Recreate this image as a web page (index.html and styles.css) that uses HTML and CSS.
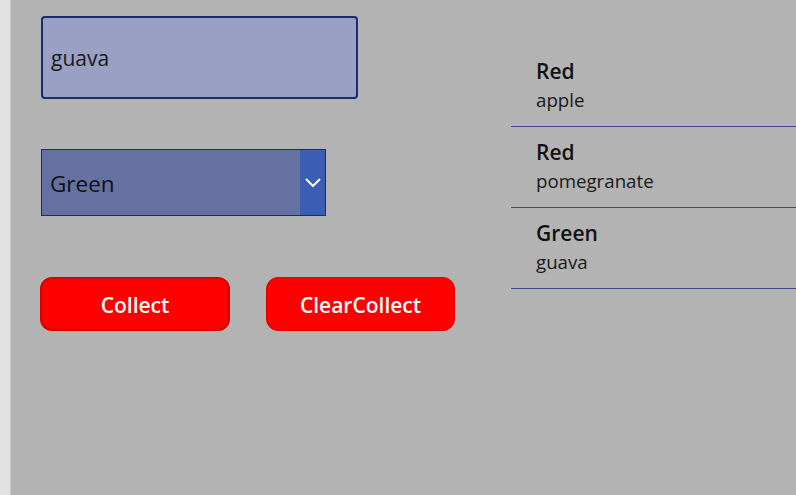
FILE: index.html
```html
<!DOCTYPE html>
<html lang="en">
<head>
<meta charset="utf-8">
<title>Collect</title>
<link rel="stylesheet" href="styles.css">
</head>
<body>
<div class="app">
  <div class="rail"></div>
  <div class="canvas">
    <div class="controls">
      <div class="text-input">guava</div>
      <div class="dropdown">
        <div class="dropdown-value">Green</div>
        <div class="dropdown-chevron">
          <svg width="16" height="9" viewBox="0 0 16 9"><polyline points="1,1 8,8 15,1" fill="none" stroke="#ffffff" stroke-width="2"/></svg>
        </div>
      </div>
      <div class="buttons">
        <button class="btn btn-collect">Collect</button>
        <button class="btn btn-clear">ClearCollect</button>
      </div>
    </div>
    <div class="gallery">
      <div class="row">
        <div class="row-title">Red</div>
        <div class="row-sub">apple</div>
      </div>
      <div class="row">
        <div class="row-title">Red</div>
        <div class="row-sub">pomegranate</div>
      </div>
      <div class="row">
        <div class="row-title">Green</div>
        <div class="row-sub">guava</div>
      </div>
    </div>
  </div>
</div>
</body>
</html>
```
FILE: styles.css
```css
html, body {
  margin: 0;
  padding: 0;
}
body {
  font-family: "Open Sans", "Noto Sans", sans-serif;
  background: #b3b3b3;
  overflow: hidden;
}
.app {
  display: flex;
  width: 796px;
  height: 495px;
}
.rail {
  width: 10px;
  flex: none;
  background: #e1e1e1;
  border-right: 1px solid #c7c7c7;
}
.canvas {
  flex: 1;
  display: flex;
  background: #b3b3b3;
}
.controls {
  width: 500px;
  flex: none;
  box-sizing: border-box;
  padding: 16px 0 0 30px;
}
.text-input {
  box-sizing: border-box;
  width: 317px;
  height: 83px;
  background: #99a0c4;
  border: 2px solid #1c2a6e;
  border-radius: 4px;
  display: flex;
  align-items: center;
  padding-left: 8px;
  font-size: 21px;
  color: #1a1a1a;
}
.dropdown {
  box-sizing: border-box;
  margin-top: 50px;
  width: 285px;
  height: 67px;
  border: 1px solid #1c2a6e;
  display: flex;
  background: #6571a3;
}
.dropdown-value {
  flex: 1;
  display: flex;
  align-items: center;
  padding: 1px 0 0 8px;
  font-size: 22.5px;
  color: #111111;
}
.dropdown-chevron {
  width: 25px;
  background: #3a5fb2;
  display: flex;
  align-items: center;
  justify-content: center;
}
.dropdown-chevron svg {
  display: block;
}
.buttons {
  display: flex;
  gap: 36px;
  margin-top: 61px;
  margin-left: -1px;
}
.btn {
  box-sizing: border-box;
  height: 54px;
  background: #ff0000;
  color: #ffffff;
  font-family: "Open Sans", "Noto Sans", sans-serif;
  font-weight: 600;
  font-size: 21px;
  border-radius: 12px;
  padding: 2px 0 0 0;
  cursor: pointer;
}
.btn-collect {
  width: 190px;
  border: 2px solid #d70000;
}
.btn-clear {
  width: 189px;
  border: 1px solid #e00000;
}
.gallery {
  flex: 1;
  margin-top: 46px;
}
.row {
  box-sizing: border-box;
  height: 81px;
  padding: 11px 0 0 25px;
  border-bottom: 1px solid #3f4c8c;
}
.row-title {
  font-weight: 600;
  font-size: 21px;
  line-height: 28px;
  color: #111111;
}
.row-sub {
  margin-top: 2px;
  font-size: 18.7px;
  line-height: 26px;
  color: #1a1a1a;
}
```
